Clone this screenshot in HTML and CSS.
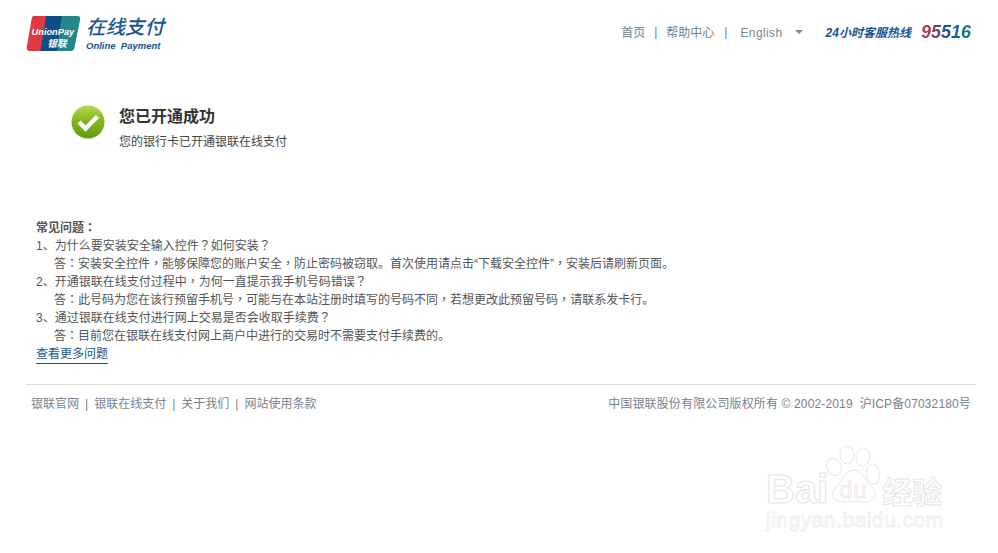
FILE: index.html
```html
<!DOCTYPE html>
<html lang="zh-CN">
	<head>
		<meta charset="UTF-8" />
		<title>在线支付</title>
		<link rel="stylesheet" href="styles.css">
	</head>
	<body>
		<header class="top">
			<div class="logo">
				<svg class="card" width="55" height="35" viewBox="0 0 55 36">
					<path d="M7 0H21L15 36H3Q-.500 36 0 32L5 3Q5.500 0 7 0Z" fill="#df3a3f"/>
					<path d="M20 0H38L32 36H14Z" fill="#0f4c8a"/>
					<path d="M36 0H52Q55.500 0 55 3L49 33Q48.500 36 45 36H31Z" fill="#24868a"/>
					<text class="card-en" x="5" y="20">UnionPay</text>
					<text class="card-cn" x="21" y="32">银联</text>
				</svg>
				<div class="logo-text">
					<div class="logo-cn">在线支付</div>
					<div class="logo-en">Online&nbsp; Payment</div>
				</div>
			</div>
			<nav class="topnav">
				<a>首页</a><span class="sep">|</span><a>帮助中心</a><span class="sep sep-last">|</span>
				<a class="lang">English</a><i class="caret"></i>
				<span class="hotline">24小时客服热线</span>
				<span class="phone">95516</span>
			</nav>
		</header>

		<section class="result">
			<svg class="ok" width="34" height="34" viewBox="0 0 34 34">
				<defs>
					<linearGradient id="okFill" x1="0" y1="0" x2="0" y2="1">
						<stop offset="0" stop-color="#b4d84a"/>
						<stop offset="0.5" stop-color="#7db61c"/>
						<stop offset="1" stop-color="#5f9e10"/>
					</linearGradient>
				</defs>
				<circle cx="17" cy="17" r="16.500" fill="url(#okFill)"/>
				<path d="M8 17L14.500 23.500L26.500 11.500" fill="none" stroke="#fff" stroke-width="4.500"/>
			</svg>
			<div>
				<h2>您已开通成功</h2>
				<p>您的银行卡已开通银联在线支付</p>
			</div>
		</section>

		<section class="faq">
			<h3>常见问题<span class="pc" lang="zh-TW">：</span></h3>
			<p>1、为什么要安装安全输入控件<span class="pc" lang="zh-TW">？</span>如何安装<span class="pc" lang="zh-TW">？</span></p>
			<p class="answer">答<span class="pc" lang="zh-TW">：</span>安装安全控件<span class="pc" lang="zh-TW">，</span>能够保障您的账户安全<span class="pc" lang="zh-TW">，</span>防止密码被窃取。首次使用请点击“下载安全控件”<span class="pc" lang="zh-TW">，</span>安装后请刷新页面。</p>
			<p>2、开通银联在线支付过程中<span class="pc" lang="zh-TW">，</span>为何一直提示我手机号码错误<span class="pc" lang="zh-TW">？</span></p>
			<p class="answer">答<span class="pc" lang="zh-TW">：</span>此号码为您在该行预留手机号<span class="pc" lang="zh-TW">，</span>可能与在本站注册时填写的号码不同<span class="pc" lang="zh-TW">，</span>若想更改此预留号码<span class="pc" lang="zh-TW">，</span>请联系发卡行。</p>
			<p>3、通过银联在线支付进行网上交易是否会收取手续费<span class="pc" lang="zh-TW">？</span></p>
			<p class="answer">答<span class="pc" lang="zh-TW">：</span>目前您在银联在线支付网上商户中进行的交易时不需要支付手续费的。</p>
			<a class="more">查看更多问题</a>
		</section>

		<footer class="foot">
			<div>
				<a>银联官网</a><span class="sep">|</span><a>银联在线支付</a><span class="sep">|</span><a>关于我们</a><span class="sep">|</span><a>网站使用条款</a>
			</div>
			<div class="copy">中国银联股份有限公司版权所有 © 2002-2019&nbsp; 沪ICP备07032180号</div>
		</footer>

		<div class="watermark">
			<svg class="paw" width="56" height="60" viewBox="0 0 56 60">
				<g fill="#fff" stroke="#e6e6e6">
					<ellipse cx="8" cy="23" rx="7" ry="9" transform="rotate(-25 8 23)"/>
					<ellipse cx="21" cy="11" rx="7" ry="9" transform="rotate(-5 21 11)"/>
					<ellipse cx="37" cy="13" rx="7" ry="9" transform="rotate(5 37 13)"/>
					<ellipse cx="47" cy="30" rx="6.500" ry="10" transform="rotate(-5 47 30)"/>
					<path d="M28 26C37 26 39 37 45 42C54 49 47 59 38 58C32 57 24 57 18 58C9 59 2 49 11 42C17 37 19 26 28 26Z"/>
				</g>
				<text class="paw-du" x="13" y="54">du</text>
			</svg>
			<div class="wm-row"><span class="wm-bai">Bai</span><span class="wm-gap"></span><span class="wm-cn">经验</span></div>
			<div class="wm-url">jingyan.baidu.com</div>
		</div>
	</body>
</html>
```

FILE: styles.css
```css
* {
	box-sizing: border-box;
	margin: 0;
	padding: 0;
}

body {
	background: #fff;
	color: #555;
	font-family: "Liberation Sans", "Noto Sans CJK SC", sans-serif;
	font-size: 12px;
	padding: 0 22px 0 26px;
	height: 553px;
	overflow: hidden;
	position: relative;
}

.top {
	display: flex;
	justify-content: space-between;
	align-items: flex-start;
	padding-top: 15px;
	height: 105px;
}

.logo {
	display: flex;
	gap: 5px;
}

.card {
	margin-top: 1px;
}

.card-en {
	font: italic bold 9.500px "Liberation Sans", sans-serif;
	fill: #fff;
}

.card-cn {
	font: italic bold 10px "Noto Sans CJK SC", sans-serif;
	fill: #fff;
}

.logo-cn {
	color: #17568f;
	font-size: 19.500px;
	font-weight: 500;
	font-style: italic;
	line-height: 24px;
}

.logo-en {
	color: #17568f;
	font-size: 9.500px;
	font-weight: bold;
	font-style: italic;
	line-height: 12px;
	margin-top: 1px;
}

.topnav {
	display: flex;
	align-items: center;
	color: #6d7f8c;
	height: 33px;
	padding-right: 5px;
}

.topnav .sep {
	margin: 0 9px;
}

.topnav .sep-last {
	margin: 0 6px 0 10px;
}

.lang {
	color: #7b8594;
	margin-left: 7px;
	padding-top: 2px;
	letter-spacing: 0.400px;
}

.caret {
	border: 4px solid transparent;
	border-top-color: #7b8594;
	border-bottom-width: 0;
	margin: 1px 0 0 12px;
}

.hotline {
	color: #17568f;
	font-weight: bold;
	font-style: italic;
	margin-left: 23px;
}

.phone {
	font-size: 18px;
	font-weight: bold;
	font-style: italic;
	margin: 2px 0 0 10px;
	background: linear-gradient(to right, #d9333a, #17568f 55%, #1a7f86);
	-webkit-background-clip: text;
	background-clip: text;
	color: transparent;
}

.result {
	display: flex;
	gap: 14px;
	padding-left: 45px;
	height: 114px;
}

.result h2 {
	color: #333;
	font-size: 16px;
	line-height: 22px;
	margin: 1px 0 5px;
}

.result p {
	color: #444;
	line-height: 18px;
}

.faq {
	padding-left: 10px;
	line-height: 18px;
	height: 165px;
}

.faq h3 {
	font-size: 12px;
	color: #555;
}

/* centred full-width punctuation, line-height 0 keeps the rows at 18px */
.pc {
	font-family: "Noto Sans CJK TC", sans-serif;
	line-height: 0;
}

.answer {
	padding-left: 18px;
}

.more {
	display: inline-block;
	color: #17568f;
	border-bottom: 1px solid #17568f;
}

.foot {
	display: flex;
	justify-content: space-between;
	border-top: 1px solid #ddd;
	padding: 10px 5px 0;
	line-height: 18px;
	color: #76828f;
}

.foot .sep {
	margin: 0 6px;
}

.copy {
	letter-spacing: 0.140px;
}

/* watermark sits over the page */
.watermark {
	position: absolute;
	left: 766px;
	top: 446px;
	width: 180px;
	height: 90px;
	color: #fff;
}

.paw {
	position: absolute;
	left: 60px;
	top: -2px;
}

.paw-du {
	font: 24px "Liberation Sans", sans-serif;
	letter-spacing: 1px;
	fill: #fff;
	stroke: #e2e2e2;
	stroke-width: 0.700px;
}

.wm-row {
	display: flex;
	align-items: flex-end;
	position: absolute;
	top: 23px;
	left: 0;
}

.wm-bai {
	font-size: 40px;
	font-weight: bold;
	line-height: 40px;
	-webkit-text-stroke: 1px #e4e4e4;
}

.wm-gap {
	width: 54px;
}

.wm-cn {
	font-family: "Noto Sans CJK SC", sans-serif;
	font-size: 30px;
	font-weight: bold;
	line-height: 38px;
	-webkit-text-stroke: 1px #e6e6e6;
}

.wm-url {
	position: absolute;
	top: 61px;
	left: 0;
	font-size: 21px;
	line-height: 26px;
	letter-spacing: 0.500px;
	white-space: nowrap;
	-webkit-text-stroke: 0.800px #ececec;
}
```
